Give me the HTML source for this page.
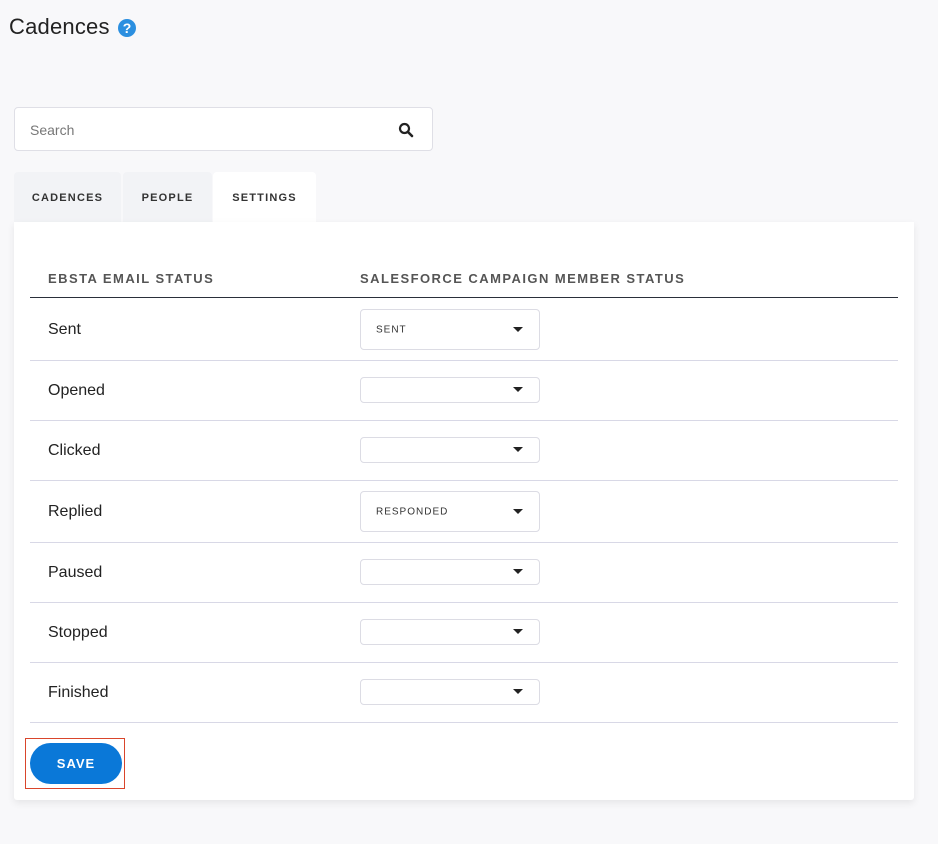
<!DOCTYPE html>
<html><head><style>
body{margin:0;width:938px;height:844px;background:#f8f8fa;font-family:"Liberation Sans",sans-serif;position:relative;overflow:hidden;color:#222}
.a{position:absolute}
.tab{position:absolute;top:172px;height:50px;line-height:52px;text-align:center;font-size:11px;letter-spacing:1.2px;font-weight:bold;color:#333;background:#f2f3f6;border-radius:4px 4px 0 0}
.card{position:absolute;left:14px;top:222px;width:900px;height:578px;background:#fff;box-shadow:0 3px 8px rgba(0,0,0,.08);border-radius:0 0 3px 3px}
.line{position:absolute;left:30px;width:868px;height:1px;background:#d8d8e6}
.lbl{position:absolute;left:48px;font-size:16px;color:#222}
.sel{position:absolute;left:360px;width:178px;border:1px solid #dcdce4;border-radius:4px;background:#fff;font-size:10px;letter-spacing:1px;color:#333}
.sel span{position:absolute;left:15px;top:50%;transform:translateY(-50%)}
.sel i{position:absolute;right:16px;top:50%;margin-top:-3px;border-left:5px solid transparent;border-right:5px solid transparent;border-top:5px solid #222}
.hd{position:absolute;top:271px;font-size:13px;font-weight:bold;letter-spacing:1.45px;color:#555}
</style></head><body>
<div class="a" style="left:9px;top:14px;font-size:22px;color:#222;letter-spacing:0.2px">Cadences</div>
<div class="a" style="left:118px;top:19px;width:18px;height:18px;border-radius:50%;background:#2b8fe0;color:#fff;font-size:14px;font-weight:bold;text-align:center;line-height:18px">?</div>
<div class="a" style="left:14px;top:107px;width:417px;height:42px;background:#fff;border:1px solid #dfdfe6;border-radius:4px"></div>
<div class="a" style="left:30px;top:122px;font-size:14px;color:#777">Search</div>
<svg class="a" style="left:398px;top:122px" width="16" height="16" viewBox="0 0 16 16"><circle cx="6.5" cy="6.5" r="4.5" fill="none" stroke="#222" stroke-width="2.2"/><path d="M10 10l4 4" stroke="#222" stroke-width="2.6" stroke-linecap="round"/></svg>
<div class="tab" style="left:14px;width:107px">CADENCES</div>
<div class="tab" style="left:123px;width:89px">PEOPLE</div>
<div class="tab" style="left:213px;width:103px;background:#fff">SETTINGS</div>
<div class="card"></div>
<div class="hd" style="left:48px">EBSTA EMAIL STATUS</div>
<div class="hd" style="left:360px">SALESFORCE CAMPAIGN MEMBER STATUS</div>
<div class="line" style="top:297px;background:#2a2f3a"></div>
<div class="line" style="top:360px"></div><div class="line" style="top:420px"></div><div class="line" style="top:480px"></div><div class="line" style="top:542px"></div><div class="line" style="top:602px"></div><div class="line" style="top:662px"></div><div class="line" style="top:722px"></div>
<div class="lbl" style="top:321px">Sent</div>
<div class="lbl" style="top:382px">Opened</div>
<div class="lbl" style="top:442px">Clicked</div>
<div class="lbl" style="top:503px">Replied</div>
<div class="lbl" style="top:564px">Paused</div>
<div class="lbl" style="top:624px">Stopped</div>
<div class="lbl" style="top:684px">Finished</div>
<div class="sel" style="top:309px;height:39px"><span>SENT</span><i></i></div>
<div class="sel" style="top:377px;height:24px"><i></i></div>
<div class="sel" style="top:437px;height:24px"><i></i></div>
<div class="sel" style="top:491px;height:39px"><span>RESPONDED</span><i></i></div>
<div class="sel" style="top:559px;height:24px"><i></i></div>
<div class="sel" style="top:619px;height:24px"><i></i></div>
<div class="sel" style="top:679px;height:24px"><i></i></div>
<div class="a" style="left:25px;top:738px;width:98px;height:49px;border:1px solid #d9452b"></div>
<div class="a" style="left:30px;top:743px;width:92px;height:41px;border-radius:21px;background:#0a78d8;color:#fff;font-weight:bold;font-size:13px;letter-spacing:1px;text-align:center;line-height:41px">SAVE</div>
</body></html>
